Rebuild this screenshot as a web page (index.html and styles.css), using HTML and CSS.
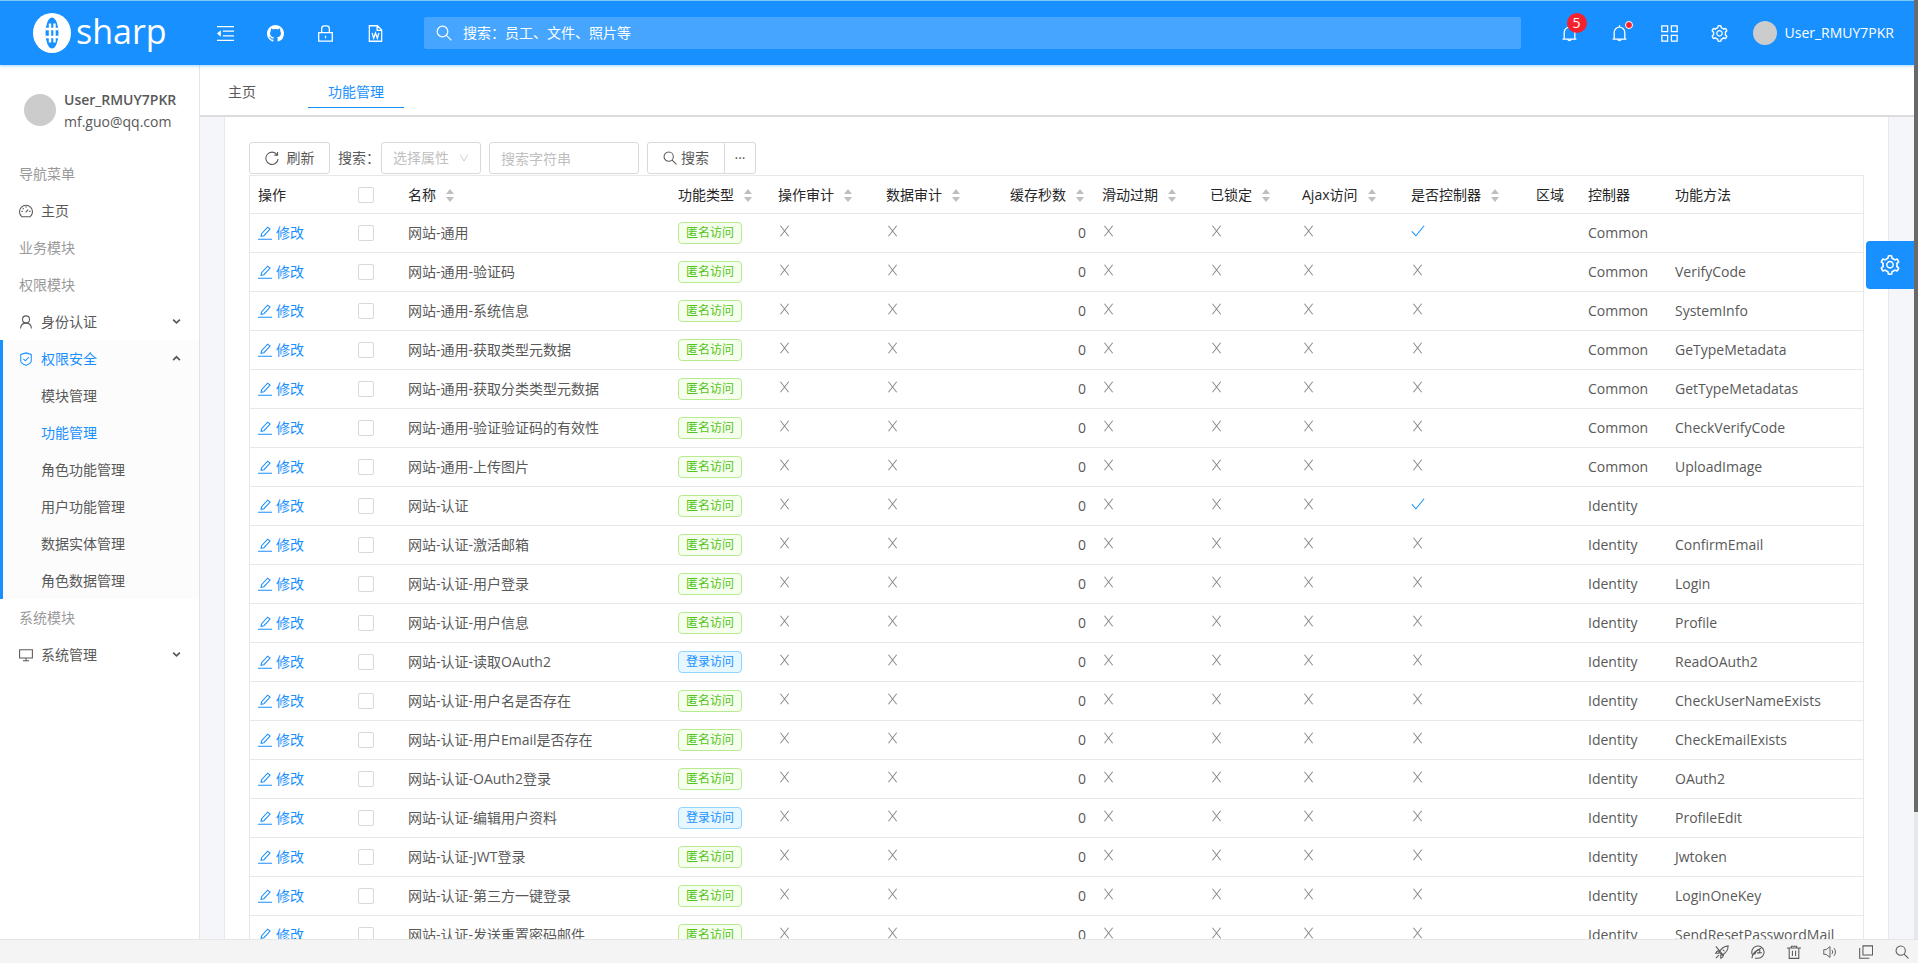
FILE: index.html
```
<!DOCTYPE html>
<html lang="zh-CN">
<head>
  <meta charset="UTF-8" />
  <meta name="viewport" content="width=device-width, initial-scale=1.0"/>
  <title>功能管理 - OSharp</title>
  <link rel="stylesheet" href="styles.css">
</head>
<body>
  <!-- icon set -->
  <svg class="sprite" aria-hidden="true">
    <symbol id="i-fold" viewBox="0 0 16 16"><path d="M0 1.5h16M5.5 5.8H16M5.5 10.2H16M0 14.5h16"/><path class="solid" d="M0 8l3.6-3v6z"/></symbol>
    <symbol id="i-github" viewBox="0 0 16 16"><path class="solid" d="M8 0C3.58 0 0 3.58 0 8c0 3.54 2.29 6.53 5.47 7.59.4.07.55-.17.55-.38 0-.19-.01-.82-.01-1.49-2.01.37-2.53-.49-2.69-.94-.09-.23-.48-.94-.82-1.13-.28-.15-.68-.52-.01-.53.63-.01 1.08.58 1.23.82.72 1.21 1.87.87 2.33.66.07-.52.28-.87.51-1.07-1.78-.2-3.64-.89-3.64-3.95 0-.87.31-1.59.82-2.15-.08-.2-.36-1.02.08-2.12 0 0 .67-.21 2.2.82.64-.18 1.32-.27 2-.27s1.36.09 2 .27c1.53-1.04 2.2-.82 2.2-.82.44 1.1.16 1.92.08 2.12.51.56.82 1.27.82 2.15 0 3.07-1.87 3.75-3.65 3.95.29.25.54.73.54 1.48 0 1.07-.01 1.93-.01 2.2 0 .21.15.46.55.38A8.01 8.01 0 0 0 16 8c0-4.42-3.58-8-8-8z"/></symbol>
    <symbol id="i-lock" viewBox="0 0 16 16"><path d="M1.6 7.2h12.8v8H1.6zM4.4 7.2V3.4Q4.4.8 7 .8h2q2.6 0 2.6 2.6v3.8M8 10v2.4"/></symbol>
    <symbol id="i-word" viewBox="0 0 16 16"><path d="M2.2.7h7.6l4 4v10.6H2.2zM9.5.9v4.1h4.1M4.8 7.5l1.5 5 1.7-5 1.7 5 1.5-5"/></symbol>
    <symbol id="i-search" viewBox="0 0 16 16"><circle cx="6.5" cy="6.5" r="5.3"/><path d="M10.4 10.4l5 5"/></symbol>
    <symbol id="i-bell" viewBox="0 0 16 16"><path d="M1.5 13.3h13M3 13.3V7a5 5 0 0 1 10 0v6.3M8 .3V2M6.3 13.5a1.8 1.8 0 0 0 3.4 0"/></symbol>
    <symbol id="i-apps" viewBox="0 0 16 16"><path d="M.8.8h5.4v5.4H.8zM9.8.8h5.4v5.4H9.8zM.8 9.8h5.4v5.4H.8zM9.8 9.8h5.4v5.4H9.8z"/></symbol>
    <symbol id="i-setting" viewBox="64 64 896 896"><path class="solid" d="M924.8 625.7l-65.5-56c3.1-19 4.7-38.4 4.7-57.8s-1.6-38.8-4.7-57.8l65.5-56a32.03 32.03 0 0 0 9.3-35.2l-.9-2.6a443.74 443.74 0 0 0-79.7-137.9l-1.8-2.1a32.12 32.12 0 0 0-35.1-9.5l-81.3 28.9c-30-24.6-63.5-44-99.7-57.6l-15.7-85a32.05 32.05 0 0 0-25.8-25.7l-2.7-.5c-52.1-9.4-106.9-9.4-159 0l-2.7.5a32.05 32.05 0 0 0-25.8 25.7l-15.8 85.4a351.86 351.86 0 0 0-99 57.4l-81.9-29.1a32 32 0 0 0-35.1 9.5l-1.8 2.1a446.02 446.02 0 0 0-79.7 137.9l-.9 2.6c-4.5 12.5-.8 26.5 9.3 35.2l66.3 56.6c-3.1 18.8-4.6 38-4.6 57.1 0 19.2 1.5 38.4 4.6 57.1L99 625.5a32.03 32.03 0 0 0-9.3 35.2l.9 2.6c18.1 50.4 44.9 96.9 79.7 137.9l1.8 2.1a32.12 32.12 0 0 0 35.1 9.5l81.9-29.1c29.8 24.5 63.1 43.9 99 57.4l15.8 85.4a32.05 32.05 0 0 0 25.8 25.7l2.7.5a449.4 449.4 0 0 0 159 0l2.7-.5a32.05 32.05 0 0 0 25.8-25.7l15.7-85a350 350 0 0 0 99.7-57.6l81.3 28.9a32 32 0 0 0 35.1-9.5l1.8-2.1c34.8-41.1 61.6-87.5 79.7-137.9l.9-2.6c4.5-12.3.8-26.3-9.3-35zM788.3 465.9c2.5 15.1 3.8 30.6 3.8 46.1s-1.3 31-3.8 46.1l-6.6 40.1 74.7 63.9a370.03 370.03 0 0 1-42.6 73.6L721 702.8l-31.4 25.8c-23.9 19.6-50.5 35-79.3 45.8l-38.1 14.3-17.9 97a377.5 377.5 0 0 1-85 0l-17.9-97.2-37.8-14.5c-28.5-10.8-55-26.2-78.7-45.7l-31.4-25.9-93.4 33.2c-17-22.9-31.2-47.6-42.6-73.6l75.5-64.5-6.5-40c-2.4-14.9-3.7-30.3-3.7-45.5 0-15.3 1.2-30.6 3.7-45.5l6.5-40-75.5-64.5c11.3-26.1 25.6-50.7 42.6-73.6l93.4 33.2 31.4-25.9c23.7-19.5 50.2-34.9 78.7-45.7l37.9-14.3 17.9-97.2c28.1-3.2 56.8-3.2 85 0l17.9 97 38.1 14.3c28.7 10.8 55.4 26.2 79.3 45.8l31.4 25.8 92.8-32.9c17 22.9 31.2 47.6 42.6 73.6L781.8 426l6.5 39.9zM512 326c-97.2 0-176 78.8-176 176s78.8 176 176 176 176-78.8 176-176-78.8-176-176-176zm79.2 255.2A111.6 111.6 0 0 1 512 614c-29.9 0-58-11.7-79.2-32.8A111.6 111.6 0 0 1 400 502c0-29.9 11.7-58 32.8-79.2C454 401.6 482.1 390 512 390c29.9 0 58 11.6 79.2 32.8A111.6 111.6 0 0 1 624 502c0 29.9-11.7 58-32.8 79.2z"/></symbol>
    <symbol id="i-dashboard" viewBox="0 0 16 16"><path d="M3.2 14.500A7.400 7.400 0 1 1 12.8 14.500zM7.6 9.6l3-3.2M8 2.6v1.6M2.8 8.4h1.6M11.6 8.4h1.6M4.4 4.8l1 1"/></symbol>
    <symbol id="i-user" viewBox="0 0 16 16"><circle cx="8" cy="5" r="4"/><path d="M1.8 15.5c.2-3.6 2.6-6.2 6.2-6.2s6 2.6 6.2 6.2"/></symbol>
    <symbol id="i-safety" viewBox="0 0 16 16"><path d="M8 1l6 1.8v7.4c0 2-3 3.8-6 5-3-1.200-6-3-6-5V2.800zM5 7.800l2.300 2.300L11.200 6"/></symbol>
    <symbol id="i-desktop" viewBox="0 0 16 16"><path d="M.7 2h14.6v9.500H.7zM8 11.500v2.800M4.500 14.500h7"/></symbol>
    <symbol id="i-down" viewBox="0 0 16 16"><path d="M2 4.500l6 6 6-6"/></symbol>
    <symbol id="i-up" viewBox="0 0 16 16"><path d="M2 11l6-6 6 6"/></symbol>
    <symbol id="i-arrow" viewBox="0 0 16 16"><path d="M2 2.500l6 10.500 6-10.500"/></symbol>
    <symbol id="i-reload" viewBox="0 0 16 16"><path d="M13.700 4.200A7 7 0 1 0 15 9M14.400 1v3.700h-3.700"/></symbol>
    <symbol id="i-edit" viewBox="0 0 16 16"><path d="M0 15.200h16M3.500 11.800l.600-3L11 1.300l2.800 2.300-7 7.500z"/></symbol>
    <symbol id="i-close" viewBox="0 0 16 16"><path d="M2.800 2l9.400 12M12.200 2l-9.400 12"/></symbol>
    <symbol id="i-check" viewBox="0 0 16 16"><path d="M1 8.500l4.600 5L15 2"/></symbol>
    <symbol id="i-rocket" viewBox="0 0 16 16"><path d="M4.500 8.500C7 4 10 1.500 15 1c0 5-2.500 8-7 10.500zM5.500 7H2.500L.8 9.300l3.700.2M9 10.500v3l-2.300 1.700-.2-3.700M1 1.500l9 11M4.500 11.500L1 15M9 5.500l1.700 1.600"/></symbol>
    <symbol id="i-speed" viewBox="0 0 16 16"><path d="M1.500 11A7 7 0 1 1 8 15.200H4.500M1 15C2 9.500 5 6 11.500 3.800M4 11c1-3 3-5 6-6v3.800h2.500M7 9h3"/></symbol>
    <symbol id="i-trash" viewBox="0 0 16 16"><path d="M0 3.500h16M5 3.500v-2h6v2M2.500 3.500v11.800h11V3.500M6.200 6.500v6M9.800 6.500v6"/></symbol>
    <symbol id="i-sound" viewBox="0 0 18 16"><path d="M1 5h3l5-4v14l-5-4H1zM11.500 5.500c1.200 1.500 1.200 3.500 0 5M14 3c2.600 3 2.600 7 0 10"/></symbol>
    <symbol id="i-window" viewBox="0 0 16 16"><path d="M4.500 1h11v10.500h-11zM.8 3.500v11.700h11"/></symbol>
    <symbol id="i-sorter" viewBox="0 0 8 13"><path class="solid" d="M0 5l4-5 4 5zM0 8h8l-4 5z"/></symbol>
  </svg>

  <div class="viewport">
    <div class="app">
      <header class="header">
        <a href="#" class="logo">
          <svg viewBox="0 0 38 40"><ellipse cx="19" cy="20" rx="19" ry="20" fill="#fff"/><ellipse cx="19" cy="20" rx="6.500" ry="15.500" fill="#1890ff"/><path d="M17 10.500v19M21.500 10.500v19M12.500 16h13M12.500 24h13" stroke="#fff" stroke-width="2.400"/></svg>
          <span>sharp</span>
        </a>
        <nav class="header-left">
          <button class="icon-btn" aria-label="折叠菜单"><svg class="icon"><use href="#i-fold"/></svg></button>
          <a class="icon-btn" href="#" aria-label="Github"><svg class="icon"><use href="#i-github"/></svg></a>
          <button class="icon-btn" aria-label="锁屏"><svg class="icon"><use href="#i-lock"/></svg></button>
          <a class="icon-btn" href="#" aria-label="文档"><svg class="icon"><use href="#i-word"/></svg></a>
        </nav>
        <div class="header-search">
          <svg class="icon"><use href="#i-search"/></svg>
          <input type="text" placeholder="搜索：员工、文件、照片等" aria-label="搜索">
        </div>
        <nav class="header-right">
          <button class="icon-btn" aria-label="通知"><svg class="icon"><use href="#i-bell"/></svg><span class="badge">5</span></button>
          <button class="icon-btn" aria-label="任务"><svg class="icon"><use href="#i-bell"/></svg><span class="dot"></span></button>
          <button class="icon-btn" aria-label="应用"><svg class="icon"><use href="#i-apps"/></svg></button>
          <button class="icon-btn" aria-label="设置"><svg class="icon"><use href="#i-setting"/></svg></button>
          <a href="#" class="account"><span class="avatar"></span>User_RMUY7PKR</a>
        </nav>
      </header>

      <div class="layout">
        <aside class="sidebar">
          <div class="profile">
            <span class="avatar"></span>
            <div>
              <strong>User_RMUY7PKR</strong>
              <p>mf.guo@qq.com</p>
            </div>
          </div>
          <ul class="menu">
            <li class="group">导航菜单</li>
            <li><a href="#"><svg class="icon"><use href="#i-dashboard"/></svg>主页</a></li>
            <li class="group">业务模块</li>
            <li class="group">权限模块</li>
            <li><a href="#"><svg class="icon"><use href="#i-user"/></svg>身份认证<svg class="icon caret"><use href="#i-down"/></svg></a></li>
            <li class="open">
              <a href="#" class="active"><svg class="icon"><use href="#i-safety"/></svg>权限安全<svg class="icon caret"><use href="#i-up"/></svg></a>
              <ul class="submenu">
                <li><a href="#">模块管理</a></li>
                <li><a href="#" class="active">功能管理</a></li>
                <li><a href="#">角色功能管理</a></li>
                <li><a href="#">用户功能管理</a></li>
                <li><a href="#">数据实体管理</a></li>
                <li><a href="#">角色数据管理</a></li>
              </ul>
            </li>
            <li class="group">系统模块</li>
            <li><a href="#"><svg class="icon"><use href="#i-desktop"/></svg>系统管理<svg class="icon caret"><use href="#i-down"/></svg></a></li>
          </ul>
        </aside>

        <main class="content">
          <nav class="tabs">
            <a href="#">主页</a>
            <a href="#" class="active">功能管理</a>
          </nav>
          <section class="card">
            <div class="toolbar">
              <button class="btn btn-refresh"><svg class="icon"><use href="#i-reload"/></svg>刷新</button>
              <label for="searchField">搜索：</label>
              <div class="select">
                <select id="searchField">
                  <option>选择属性</option>
                </select>
                <svg class="icon"><use href="#i-arrow"/></svg>
              </div>
              <input type="text" class="input" placeholder="搜索字符串" aria-label="搜索字符串">
              <div class="btn-group">
                <button class="btn btn-search"><svg class="icon"><use href="#i-search"/></svg>搜索</button>
                <button class="btn btn-more" aria-label="更多">···</button>
              </div>
            </div>
            <table class="grid">
              <colgroup>
                <col class="c-action"><col class="c-check"><col class="c-name"><col class="c-type">
                <col class="c-audit"><col class="c-data"><col class="c-cache"><col class="c-audit">
                <col class="c-locked"><col class="c-ajax"><col class="c-isctrl"><col class="c-area">
                <col class="c-ctrl"><col>
              </colgroup>
              <thead>
                <tr>
                  <th>操作</th>
                  <th><input type="checkbox" aria-label="全选"></th>
                  <th>名称<svg class="sorter"><use href="#i-sorter"/></svg></th>
                  <th>功能类型<svg class="sorter"><use href="#i-sorter"/></svg></th>
                  <th>操作审计<svg class="sorter"><use href="#i-sorter"/></svg></th>
                  <th>数据审计<svg class="sorter"><use href="#i-sorter"/></svg></th>
                  <th class="right">缓存秒数<svg class="sorter"><use href="#i-sorter"/></svg></th>
                  <th>滑动过期<svg class="sorter"><use href="#i-sorter"/></svg></th>
                  <th>已锁定<svg class="sorter"><use href="#i-sorter"/></svg></th>
                  <th>Ajax访问<svg class="sorter"><use href="#i-sorter"/></svg></th>
                  <th>是否控制器<svg class="sorter"><use href="#i-sorter"/></svg></th>
                  <th>区域</th>
                  <th>控制器</th>
                  <th>功能方法</th>
                </tr>
              </thead>
              <tbody id="rows"></tbody>
            </table>
          </section>
          <button class="setting-handle" aria-label="主题设置"><svg class="icon"><use href="#i-setting"/></svg></button>
        </main>
      </div>
    </div>
    <div class="scrollbar"><div class="thumb"></div></div>
  </div>

  <footer class="statusbar">
    <button aria-label="加速"><svg class="icon"><use href="#i-rocket"/></svg></button>
    <button aria-label="网速"><svg class="icon"><use href="#i-speed"/></svg></button>
    <button aria-label="清理"><svg class="icon"><use href="#i-trash"/></svg></button>
    <button aria-label="声音"><svg class="icon"><use href="#i-sound"/></svg></button>
    <button aria-label="窗口"><svg class="icon"><use href="#i-window"/></svg></button>
    <button aria-label="缩放"><svg class="icon"><use href="#i-search"/></svg></button>
  </footer>

  <script src="script.js"></script>
</body>
</html>
```
FILE: styles.css
```
* {
  box-sizing: border-box;
}

body {
  margin: 0;
  height: 100vh;
  display: flex;
  flex-direction: column;
  overflow: hidden;
  font-family: "Open Sans", "Noto Sans CJK SC", sans-serif;
  font-size: 14px;
  line-height: 22px;
  color: #595959;
  background: #fff;
}

a {
  color: inherit;
  text-decoration: none;
}

button, input, select {
  font: inherit;
  color: inherit;
}

button {
  padding: 0;
  border: none;
  background: none;
  cursor: pointer;
}

ul {
  margin: 0;
  padding: 0;
  list-style: none;
}

.sprite {
  position: absolute;
  width: 0;
  height: 0;
}

.icon {
  width: 14px;
  height: 14px;
  flex: none;
  fill: none;
  stroke: currentColor;
  stroke-width: 1.2;
}

.solid {
  fill: currentColor;
  stroke: none;
}

.avatar {
  flex: none;
  border-radius: 50%;
  background: #ccc;
}

.viewport {
  flex: 1;
  min-height: 0;
  display: flex;
}

.app {
  flex: 1;
  min-width: 0;
  display: flex;
  flex-direction: column;
}

.scrollbar {
  width: 4px;
  background: #e8e8ec;
}

.thumb {
  height: 86.5%;
  background: #696969;
}

/* header */
.header {
  flex: none;
  height: 65px;
  display: flex;
  align-items: center;
  border-top: 1px solid #7cc8fb;
  background: #1890ff;
  color: #fff;
  box-shadow: 0 1px 3px rgba(24, 144, 255, 0.4);
  z-index: 1;
}

.logo {
  width: 200px;
  padding-left: 33px;
  display: flex;
  align-items: center;
  gap: 5px;
  font-size: 34px;
  font-weight: 500;
  line-height: 40px;
}

.logo svg {
  width: 38px;
  height: 40px;
}

.logo span {
  margin-top: -4px;
}

.header-left, .header-right {
  display: flex;
  align-items: center;
}

.icon-btn {
  position: relative;
  width: 50px;
  height: 40px;
  display: flex;
  align-items: center;
  justify-content: center;
}

.icon-btn .icon {
  width: 17px;
  height: 17px;
}

.header-search {
  flex: 1;
  height: 32px;
  margin: 0 24px;
  padding: 0 12px;
  display: flex;
  align-items: center;
  gap: 11px;
  border-radius: 2px;
  background: #46a6ff;
}

.header-search .icon {
  width: 16px;
  height: 16px;
}

.header-search input {
  flex: 1;
  padding: 0;
  border: none;
  outline: none;
  background: none;
}

.header-search input::placeholder {
  color: #fff;
  opacity: 1;
}

.badge {
  position: absolute;
  top: 0;
  left: 22px;
  width: 20px;
  height: 20px;
  border-radius: 10px;
  background: #f5222d;
  line-height: 20px;
  text-align: center;
}

.dot {
  position: absolute;
  top: 8px;
  left: 30px;
  width: 8px;
  height: 8px;
  border: 1px solid #fff;
  border-radius: 50%;
  background: #f5222d;
}

.account {
  display: flex;
  align-items: center;
  gap: 8px;
  padding: 0 20px 0 8px;
}

.account .avatar {
  width: 24px;
  height: 24px;
}

/* sidebar */
.layout {
  flex: 1;
  min-height: 0;
  display: flex;
}

.sidebar {
  flex: none;
  width: 200px;
  border-right: 1px solid #e4e4e8;
}

.profile {
  height: 90px;
  padding: 24px 16px 0 24px;
  display: flex;
  gap: 8px;
}

.profile .avatar {
  width: 32px;
  height: 32px;
  margin-top: 5px;
}

.profile strong {
  display: block;
  font-weight: 600;
}

.profile p {
  margin: 0;
}

.menu a, .menu .group {
  height: 37px;
  padding: 0 18px 0 19px;
  display: flex;
  align-items: center;
  gap: 8px;
}

.menu .group {
  color: #999;
}

.menu .caret {
  width: 9px;
  height: 9px;
  margin-left: auto;
  stroke-width: 3;
  color: #595959;
}

.menu .open {
  border-left: 3px solid #1890ff;
  background: #fcfcfc;
}

.menu .open a {
  padding-left: 16px;
}

.menu .submenu a {
  padding-left: 38px;
}

.menu .active {
  color: #1890ff;
}

/* content */
.content {
  position: relative;
  flex: 1;
  min-width: 0;
  overflow: hidden;
  background: #f5f6fa;
}

.tabs {
  height: 52px;
  padding: 6px 8px 0;
  display: flex;
  gap: 32px;
  border-bottom: 2px solid #dcdcde;
  background: #fff;
}

.tabs a {
  height: 37px;
  padding: 10px 20px 0;
}

.tabs .active {
  border-bottom: 1px solid #1890ff;
  color: #1890ff;
}

.card {
  margin: 0 25px 0 24px;
  padding: 25px 24px;
  border: 1px solid #e8e8ec;
  border-top: none;
  background: #fff;
}

.toolbar {
  height: 33px;
  padding-bottom: 1px;
  display: flex;
  align-items: center;
}

.toolbar label {
  width: 51px;
  padding-left: 8px;
  white-space: nowrap;
}

.btn, .input, .select select {
  height: 32px;
  border: 1px solid #d9d9d9;
  border-radius: 3px;
  background: #fff;
}

.btn {
  display: flex;
  align-items: center;
  justify-content: center;
}

.btn-refresh {
  width: 81px;
  gap: 8px;
}

.select {
  position: relative;
  width: 100px;
  margin-right: 8px;
}

.select select {
  width: 100%;
  padding: 0 11px;
  appearance: none;
  color: #bfbfbf;
}

.select .icon {
  position: absolute;
  top: 11px;
  right: 12px;
  width: 10px;
  height: 10px;
  color: #bfbfbf;
}

.input {
  width: 150px;
  padding: 0 11px;
}

.input::placeholder {
  color: #bfbfbf;
  opacity: 1;
}

.btn-group {
  display: flex;
  margin-left: 8px;
}

.btn-search {
  width: 78px;
  gap: 4px;
  border-radius: 3px 0 0 3px;
}

.btn-more {
  width: 32px;
  margin-left: -1px;
  border-radius: 0 3px 3px 0;
}

/* table */
.grid {
  width: 100%;
  table-layout: fixed;
  border: 1px solid #e8e8e8;
  border-spacing: 0;
}

.grid th, .grid td {
  height: 39px;
  padding: 0 8px;
  border-bottom: 1px solid #e8e8e8;
  text-align: left;
  font-weight: 400;
  white-space: nowrap;
}

.grid th {
  height: 38px;
  color: #262626;
}

.grid .right {
  text-align: right;
}

.c-action { width: 82px; }
.c-check { width: 68px; }
.c-name { width: 270px; }
.c-type { width: 100px; }
.c-audit { width: 108px; }
.c-data { width: 108px; }
.c-cache { width: 108px; }
.c-locked { width: 92px; }
.c-ajax { width: 109px; }
.c-isctrl { width: 125px; }
.c-area { width: 52px; }
.c-ctrl { width: 87px; }

.sorter {
  width: 8px;
  height: 13px;
  margin-left: 10px;
  vertical-align: -2px;
  color: #bfbfbf;
}

.right .sorter {
  margin-right: 2px;
}

.grid input {
  display: block;
  width: 16px;
  height: 16px;
  margin: 0 auto;
  appearance: none;
  border: 1px solid #d9d9d9;
  border-radius: 2px;
}

.edit {
  display: flex;
  align-items: center;
  gap: 4px;
  color: #1890ff;
}

.flag {
  display: block;
  margin-bottom: 4px;
  color: #8c8c8c;
}

.flag.yes {
  color: #1890ff;
}

.tag {
  display: block;
  width: fit-content;
  height: 22px;
  padding: 0 7px;
  border: 1px solid #b7eb8f;
  border-radius: 4px;
  background: #f6ffed;
  color: #52c41a;
  font-size: 12px;
  line-height: 20px;
}

.tag.login {
  border-color: #91d5ff;
  background: #e6f7ff;
  color: #1890ff;
}

.setting-handle {
  position: absolute;
  top: 176px;
  right: 0;
  width: 48px;
  height: 48px;
  display: flex;
  align-items: center;
  justify-content: center;
  border-radius: 4px 0 0 4px;
  background: #1890ff;
  color: #fff;
}

.setting-handle .icon {
  width: 20px;
  height: 20px;
}

/* browser status bar */
.statusbar {
  flex: none;
  height: 24px;
  padding-right: 9px;
  display: flex;
  align-items: center;
  justify-content: flex-end;
  gap: 22px;
  border-top: 1px solid #e6e6e6;
  background: #f4f4f4;
  z-index: 1;
}

.statusbar button {
  display: flex;
}
```
FILE: script.js
```
// name, controller, action, login required
const functions = [
  ['网站-通用', 'Common', ''],
  ['网站-通用-验证码', 'Common', 'VerifyCode'],
  ['网站-通用-系统信息', 'Common', 'SystemInfo'],
  ['网站-通用-获取类型元数据', 'Common', 'GeTypeMetadata'],
  ['网站-通用-获取分类类型元数据', 'Common', 'GetTypeMetadatas'],
  ['网站-通用-验证验证码的有效性', 'Common', 'CheckVerifyCode'],
  ['网站-通用-上传图片', 'Common', 'UploadImage'],
  ['网站-认证', 'Identity', ''],
  ['网站-认证-激活邮箱', 'Identity', 'ConfirmEmail'],
  ['网站-认证-用户登录', 'Identity', 'Login'],
  ['网站-认证-用户信息', 'Identity', 'Profile'],
  ['网站-认证-读取OAuth2', 'Identity', 'ReadOAuth2', true],
  ['网站-认证-用户名是否存在', 'Identity', 'CheckUserNameExists'],
  ['网站-认证-用户Email是否存在', 'Identity', 'CheckEmailExists'],
  ['网站-认证-OAuth2登录', 'Identity', 'OAuth2'],
  ['网站-认证-编辑用户资料', 'Identity', 'ProfileEdit', true],
  ['网站-认证-JWT登录', 'Identity', 'Jwtoken'],
  ['网站-认证-第三方一键登录', 'Identity', 'LoginOneKey'],
  ['网站-认证-发送重置密码邮件', 'Identity', 'SendResetPasswordMail']
];

function flag(value) {
  return `<svg class="icon flag ${value ? 'yes' : ''}"><use href="#${value ? 'i-check' : 'i-close'}"/></svg>`;
}

document.getElementById('rows').innerHTML = functions.map(([name, controller, action, login]) => `
  <tr>
    <td><a href="#" class="edit"><svg class="icon"><use href="#i-edit"/></svg>修改</a></td>
    <td><input type="checkbox" aria-label="${name}"></td>
    <td>${name}</td>
    <td><span class="tag ${login ? 'login' : ''}">${login ? '登录访问' : '匿名访问'}</span></td>
    <td>${flag(false)}</td>
    <td>${flag(false)}</td>
    <td class="right">0</td>
    <td>${flag(false)}</td>
    <td>${flag(false)}</td>
    <td>${flag(false)}</td>
    <td>${flag(action === '')}</td>
    <td></td>
    <td>${controller}</td>
    <td>${action}</td>
  </tr>`).join('');
```
